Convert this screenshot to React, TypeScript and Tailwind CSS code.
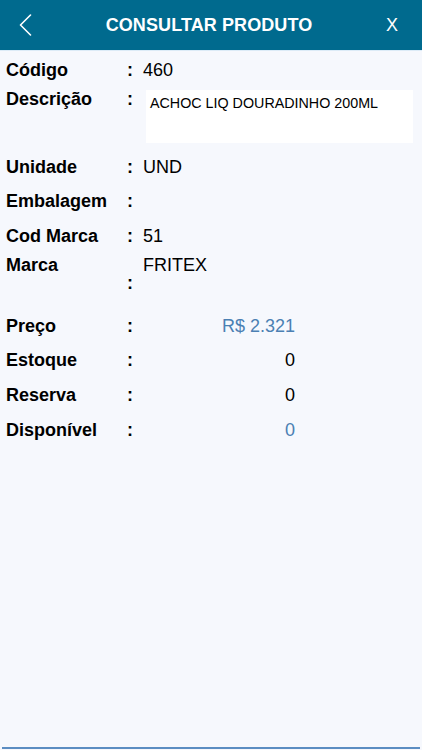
import React from "react";

const FONT = "font-['Liberation_Sans',Arial,sans-serif]";

function Row({
  label,
  value,
  className = "",
  blue = false,
  right = false,
}: {
  label: string;
  value?: string;
  className?: string;
  blue?: boolean;
  right?: boolean;
}) {
  return (
    <div className={`flex h-[24px] items-center ${className}`}>
      <span className="w-[121px] text-[18px] font-bold text-black">{label}</span>
      <span className="w-[16px] text-[18px] font-bold text-black">:</span>
      {right ? (
        <span className={`w-[152px] text-right text-[18px] ${blue ? "text-[#4b80b3]" : "text-black"}`}>
          {value}
        </span>
      ) : (
        <span className="text-[18px] text-black">{value}</span>
      )}
    </div>
  );
}

export default function App() {
  return (
    <div className={`flex min-h-[750px] w-full flex-col bg-[#f6f8fd] ${FONT}`}>
      {/* header */}
      <div className="flex h-[50px] items-center justify-between bg-[#006a8e] px-[19px] text-white">
        <svg width="13" height="22" viewBox="0 0 13 22" fill="none">
          <path d="M11.5 1 L1.5 11 L11.5 21" stroke="white" strokeWidth="1.6" strokeLinecap="round" strokeLinejoin="round" />
        </svg>
        <span className="text-[18px] font-bold tracking-[0.1px]">CONSULTAR PRODUTO</span>
        <span className="mr-[5px] text-[18px] font-normal">X</span>
      </div>
      <div className="h-px bg-[#dcebf7]" />

      <div className="flex flex-1 flex-col pl-[6px]">
        <Row label="Código" value="460" className="mt-[7px]" />

        {/* descrição */}
        <div className="mt-[5px] flex">
          <span className="h-[24px] w-[121px] text-[18px] leading-[24px] font-bold text-black">Descrição</span>
          <span className="h-[24px] w-[19px] text-[18px] leading-[24px] font-bold text-black">:</span>
          <div className="mt-[3px] h-[53px] w-[267px] bg-white px-[4px] pt-[3px] text-[14.3px] text-black">
            ACHOC LIQ DOURADINHO 200ML
          </div>
        </div>

        <Row label="Unidade" value="UND" className="mt-[12px]" />
        <Row label="Embalagem" className="mt-[10px]" />
        <Row label="Cod Marca" value="51" className="mt-[11px]" />

        {/* marca */}
        <div className="mt-[5px] flex">
          <span className="h-[24px] w-[121px] text-[18px] leading-[24px] font-bold text-black">Marca</span>
          <span className="mt-[18px] h-[24px] w-[16px] text-[18px] leading-[24px] font-bold text-black">:</span>
          <span className="h-[24px] text-[18px] leading-[24px] text-black">FRITEX</span>
        </div>

        <Row label="Preço" value="R$ 2.321" right blue className="mt-[19px]" />
        <Row label="Estoque" value="0" right className="mt-[10px]" />
        <Row label="Reserva" value="0" right className="mt-[11px]" />
        <Row label="Disponível" value="0" right blue className="mt-[11px]" />
      </div>

      <div className="mx-[2px] mb-px h-[2px] bg-[#5b8dc2]" />
    </div>
  );
}
